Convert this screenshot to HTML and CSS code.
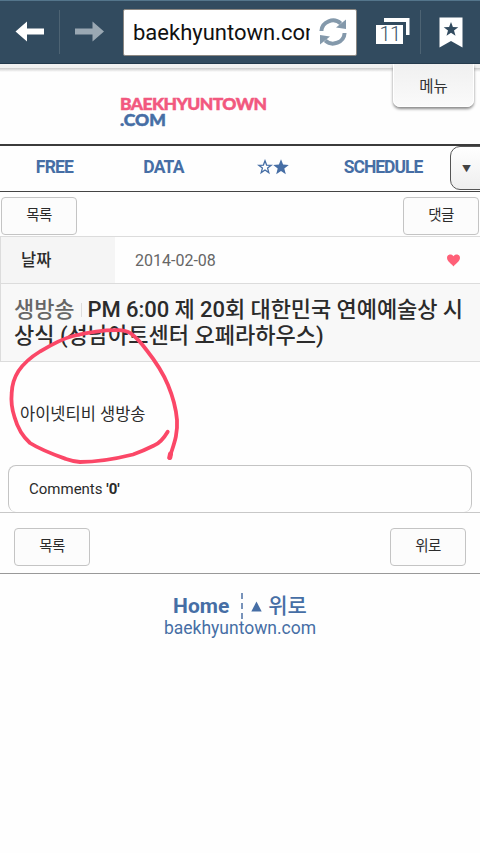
FILE: index.html
```html
<!DOCTYPE html>
<html lang="ko">
<head>
    <meta charset="UTF-8">
    <meta name="viewport" content="width=device-width, initial-scale=1.0">
    <title>baekhyuntown.com</title>
    <link rel="stylesheet" href="styles.css">
</head>
<body>
    <div class="toolbar">
        <button class="tool back">
            <svg width="30" height="22" viewBox="0 0 30 22"><path d="M0.5 10.5L12 0.5V7.5H29V13.5H12V20.5Z" fill="#fff"/></svg>
        </button>
        <button class="tool forward">
            <svg width="30" height="22" viewBox="0 0 30 22"><path d="M29 10.5L17.5 0.5V7.5H0V13.5H17.5V20.5Z" fill="#9aa8b3"/></svg>
        </button>
        <div class="url-bar">
            <span class="url">baekhyuntown.com</span>
            <svg class="reload" width="28" height="28" viewBox="0 0 28 28">
                <path d="M2.4 13A11.6 11.2 0 0 1 21.8 5.4M25.6 15A11.6 11.2 0 0 1 6.2 22.6" fill="none" stroke="#8499ab" stroke-width="4"/>
                <path d="M27 1.5V11L17 9.5ZM1 26.5V17L11 18.5Z" fill="#8499ab"/>
            </svg>
        </div>
        <button class="tool tabs">
            <svg width="36" height="28" viewBox="0 0 36 28">
                <path d="M9 1H34.5V18H31V5H9Z" fill="#fff"/>
                <path d="M1 8H28V27H1Z" fill="#fff"/>
                <text class="tab-count" x="15" y="24" text-anchor="middle">11</text>
            </svg>
        </button>
        <button class="tool bookmark">
            <svg width="24" height="31" viewBox="0 0 24 31">
                <path d="M0.5 0.5H23.5V30.5L12 24L0.5 30.5Z" fill="#fff"/>
                <path d="M12 5L13.9 10.1L19.3 10.3L15 13.6L16.5 18.8L12 15.8L7.5 18.8L9 13.6L4.7 10.3L10.1 10.1Z" fill="#324b5f"/>
            </svg>
        </button>
    </div>

    <header class="header">
        <h1 class="logo"><span class="logo-name">BAEKHYUNTOWN</span><span class="logo-com">.COM</span></h1>
        <a class="menu-btn">메뉴</a>
    </header>

    <nav class="nav">
        <a class="nav-item">FREE</a>
        <a class="nav-item">DATA</a>
        <a class="nav-item stars">
            <svg width="32" height="16" viewBox="0 0 32 16" fill="#466ea5">
                <path d="M8 1.8L9.6 6.1L14.2 6.3L10.6 9.1L11.8 13.6L8 11L4.2 13.6L5.4 9.1L1.8 6.3L6.4 6.1Z" fill="#fff" stroke="#466ea5" stroke-width="1.3"/>
                <path d="M24 0.2L26.1 5.6L31.8 5.9L27.3 9.5L28.8 15.2L24 12L19.2 15.2L20.7 9.5L16.2 5.9L21.9 5.6Z"/>
            </svg>
        </a>
        <a class="nav-item schedule">SCHEDULE</a>
        <a class="nav-more">▼</a>
    </nav>

    <div class="actions top">
        <a class="btn">목록</a>
        <a class="btn">댓글</a>
    </div>

    <div class="post-info">
        <div class="label">날짜</div>
        <div class="date">2014-02-08</div>
        <svg class="heart" width="13" height="13" viewBox="0 0 13 13"><path d="M6.5 12.5C5.5 10.5 0 7.5 0 3.7C0 0.2 4.8-0.7 6.5 2.2C8.2-0.7 13 0.2 13 3.7C13 7.5 7.5 10.5 6.5 12.5Z" fill="#ff6078"/></svg>
    </div>
    <h2 class="post-title">
        <div class="line first"><span class="category">생방송</span><span class="bar"></span>PM 6:00 제 20회 대한민국 연예예술상 시</div>
        <div class="line second">상식 (성남아트센터 오페라하우스)</div>
    </h2>

    <div class="post-body">
        <p>아이넷티비 생방송</p>
        <svg class="scribble" width="180" height="145" viewBox="0 0 180 145">
            <path d="M159.7 111.7C156 118 152 123 146 125.5C139 129 132 132 125 134.5C107 139 90 142 72 142C66 141.5 62 140.5 58 139C47 135 33 130 22 123C13 115 9 106 6.5 97C3.5 88 3 80 3.7 73C4 64 6 58 10.5 51C16 43 23 37 32 31.5C43 25 53 19 65 16C80 12.5 95 10 109 10.2C116 10 119 11 123 13.5C129 18 134 24 138.5 30C148 42 155 53 160 65C165 77 168 88 169 100C170 116 165 126 161.5 138" fill="none" stroke="#fb4767" stroke-width="3.8" stroke-linecap="round" stroke-linejoin="round"/>
            <path d="M162.5 134L161.8 137.5" fill="none" stroke="#fb4767" stroke-width="5" stroke-linecap="round"/>
        </svg>
    </div>

    <div class="comments">Comments <b>'0'</b></div>

    <div class="actions bottom">
        <a class="btn">목록</a>
        <a class="btn">위로</a>
    </div>

    <footer class="footer">
        <div class="footer-links">
            <a class="home">Home</a>
            <a class="go-top"><svg width="11" height="11" viewBox="0 0 11 11"><path d="M5.5 0.5L10.7 10.5H0.3Z" fill="#466ea5"/></svg>위로</a>
        </div>
        <div class="domain">baekhyuntown.com</div>
    </footer>
</body>
</html>
```
FILE: styles.css
```css
* {
    margin: 0;
    padding: 0;
    box-sizing: border-box;
}

body {
    background: #fefefe;
    color: #2b2b2b;
    font-family: Roboto, "Noto Sans CJK KR", sans-serif;
    overflow: hidden;
}

svg {
    display: block;
}

/* Browser toolbar */
.toolbar {
    height: 64px;
    background: #324b5f;
    border-top: 1px solid #54758b;
    border-bottom: 1px solid #22394b;
    display: flex;
    align-items: center;
}

.tool {
    background: none;
    border: 0;
    height: 44px;
    display: flex;
    align-items: center;
    justify-content: center;
}

.back {
    width: 60px;
    border-right: 1px solid #4d6373;
}

.forward {
    width: 60px;
}

.url-bar {
    margin-left: 3px;
    width: 234px;
    height: 47px;
    background: #fff;
    border: 1px solid #8b8782;
    border-radius: 2px;
    display: flex;
    align-items: center;
    justify-content: space-between;
    padding: 0 9px;
}

.url {
    width: 177px;
    overflow: hidden;
    white-space: nowrap;
    font-size: 22px;
    line-height: 30px;
    padding-top: 1px;
    color: #111;
}

.tabs {
    width: 64px;
    padding: 0 0 3px 8px;
    border-right: 1px solid #4d6373;
}

.tab-count {
    font-family: Roboto, sans-serif;
    font-size: 20px;
    font-weight: 300;
    fill: #3b5264;
    letter-spacing: -0.5px;
}

.bookmark {
    flex: 1;
}

/* Site header */
.header {
    height: 80px;
    display: flex;
    justify-content: space-between;
    align-items: flex-start;
    padding: 0 6px 0 120px;
    background: linear-gradient(#f2f2f2 0, #f0f0f0 4px, #c9c9c9 4px, #fefefe 8px);
}

.logo {
    padding-top: 32px;
    font-family: Lato, sans-serif;
    font-weight: 900;
    font-size: 17.5px;
    line-height: 16px;
}

.logo span {
    display: block;
    -webkit-text-stroke: 0.5px currentColor;
}

.logo-name {
    color: #f2587f;
    letter-spacing: -0.6px;
}

.logo-com {
    color: #466ea5;
}

.menu-btn {
    width: 81px;
    height: 43px;
    background: linear-gradient(#f0f0f0, #fafafa);
    border: 1px solid #fff;
    border-top: 0;
    border-radius: 0 0 7px 7px;
    box-shadow: 0 2px 3px #888;
    font-size: 15.5px;
    line-height: 46px;
    text-align: center;
    color: #333;
}

/* Navigation */
.nav {
    height: 48px;
    border-top: 2px solid #3b3b3b;
    border-bottom: 1px solid #444;
    display: flex;
    align-items: center;
    padding-bottom: 3px;
    position: relative;
}

.nav-item {
    width: 109px;
    text-align: center;
    color: #466ea5;
    font-size: 17.5px;
    font-weight: 700;
    letter-spacing: -0.8px;
    display: flex;
    justify-content: center;
    flex-shrink: 0;
}

.stars {
    padding-left: 1px;
}

.schedule {
    padding-left: 3px;
    letter-spacing: -1px;
}

.nav-more {
    position: absolute;
    right: -12px;
    top: 0;
    width: 42px;
    height: 44px;
    border: 1px solid #555;
    border-radius: 10px;
    background: linear-gradient(#fff, #eee);
    font-size: 9px;
    line-height: 45px;
    padding-left: 11px;
    color: #444;
}

/* Buttons */
.actions {
    display: flex;
    justify-content: space-between;
}

.top {
    height: 44px;
    padding: 5px 1px 0;
}

.bottom {
    height: 62px;
    padding: 15px 14px 0;
    border-top: 1px solid #c8c8c8;
    border-bottom: 1px solid #999;
}

.btn {
    width: 76px;
    height: 38px;
    border: 1px solid #c4c4c4;
    border-radius: 4px;
    background: #fcfcfc;
    text-align: center;
    font-size: 14.5px;
    line-height: 35px;
    letter-spacing: -0.5px;
}

/* Post */
.post-info {
    height: 47px;
    border-top: 1px solid #dcdcdc;
    border-left: 1px solid #dcdcdc;
    display: flex;
    align-items: center;
    padding-right: 20px;
}

.label {
    width: 114px;
    height: 46px;
    background: #f5f5f5;
    padding-left: 20px;
    font-size: 16.5px;
    font-weight: 500;
    line-height: 47px;
}

.date {
    flex: 1;
    padding-left: 20px;
    font-size: 16px;
    color: #666;
}

.post-title {
    height: 79px;
    background: #f8f8f8;
    border: 1px solid #dcdcdc;
    border-right: 0;
    padding: 13px 0 0 13px;
    font-size: 22px;
    font-weight: 500;
    line-height: 26px;
}

.line {
    display: flex;
    align-items: center;
    height: 26px;
    white-space: pre;
}

.first {
    letter-spacing: -0.07px;
}

.category {
    color: #666;
}

.bar {
    width: 1px;
    height: 14px;
    margin: 0 6px;
    background: #ddd;
}

.post-body {
    height: 103px;
    padding: 41px 20px 0;
    font-size: 16.5px;
    line-height: 24px;
    position: relative;
}

/* Hand-drawn circle over the text */
.scribble {
    position: absolute;
    left: 8px;
    top: -42px;
}

.comments {
    height: 47px;
    margin: 0 8px;
    border: 1px solid #c4c4c4;
    border-bottom: 0;
    border-radius: 8px;
    padding-left: 20px;
    font-size: 15px;
    line-height: 47px;
}

/* Footer */
.footer {
    padding-top: 19px;
    color: #466ea5;
    text-align: center;
}

.footer-links {
    display: flex;
    justify-content: center;
    font-size: 21px;
    font-weight: 700;
    line-height: 26px;
}

.home {
    padding-right: 12px;
    border-right: 2px dashed #7893ba;
}

.go-top {
    display: flex;
    align-items: center;
    gap: 6px;
    padding-left: 8px;
    font-weight: 500;
}

.domain {
    font-size: 17.5px;
    line-height: 19px;
}
```
